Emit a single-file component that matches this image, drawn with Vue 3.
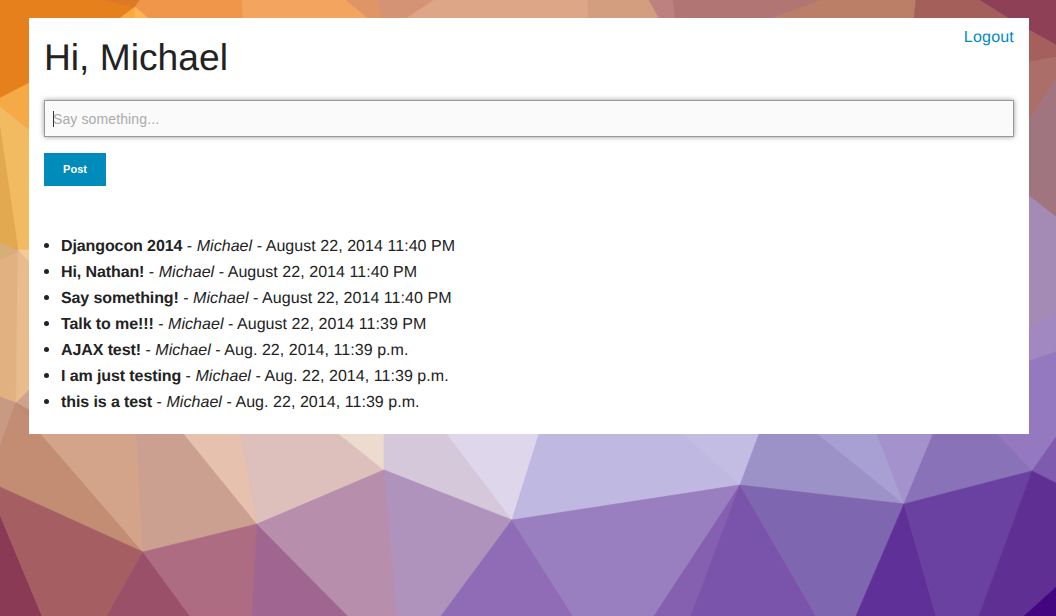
<script setup>
const facets = [
  ['#e5801c', '0,0 140,0 140,18 0,110'],
  ['#dc7a27', '103,0 135,7 140,0'],
  ['#f0964a', '140,0 242,0 243,18 148,18 135,7'],
  ['#f9a942', '135,7 135,18 120,18'],
  ['#fcb652', '135,7 148,18 135,18'],
  ['#f3a55f', '242,0 346,0 368,18 243,18'],
  ['#e09566', '346,0 378,0 382,18 368,18'],
  ['#d49374', '378,0 434,0 407,18 382,18'],
  ['#dda686', '434,0 588,0 588,18 407,18'],
  ['#d39e80', '588,0 649,0 659,18 588,18'],
  ['#bd8280', '649,0 673,0 675,18 659,18'],
  ['#b17673', '673,0 822,0 773,18 675,18'],
  ['#bb7f68', '822,0 916,0 914,18 773,18'],
  ['#a55f5b', '916,0 980,0 1009,18 914,18'],
  ['#8d4056', '980,0 1056,0 1056,45 1029,30 1029,18 1009,18'],
  ['#a55f5d', '1029,30 1056,45 1056,57 1029,62'],
  ['#ab6e68', '1029,62 1056,57 1056,80 1029,120'],
  ['#a0757f', '1029,120 1056,80 1056,217 1029,196'],
  ['#a48bb5', '1029,196 1056,217 1056,312 1029,330'],
  ['#a288c0', '1029,330 1056,312 1056,352 1029,361'],
  ['#9478c0', '1029,361 1056,352 1056,437 1032,471 997,434 1029,434'],
  ['#f5aa46', '0,98 29,83 29,130 0,107'],
  ['#f2bb62', '0,107 29,130 29,250 18,250 0,128'],
  ['#e2a950', '0,128 18,250 0,243'],
  ['#d6ae78', '0,243 18,250 0,260'],
  ['#f2cc94', '18,250 29,250 29,262'],
  ['#e1b182', '0,260 18,251 16,403 0,397'],
  ['#e9bc8d', '18,251 29,262 29,390 16,403'],
  ['#c99a83', '0,397 16,403 0,447'],
  ['#cfa28e', '16,403 29,390 29,410'],
  ['#bd8a70', '16,403 29,410 29,434 41,434 2,442'],
  ['#c28d73', '0,447 16,403 41,434 143,552 0,487'],
  ['#d3a489', '41,434 137,434 143,552'],
  ['#cba091', '137,434 184,434 257,524 143,552'],
  ['#e6c2ae', '184,434 241,434 257,524'],
  ['#ddc0bc', '241,434 339,434 384,470 257,524'],
  ['#eedbd0', '339,434 384,434 384,470'],
  ['#d5c8da', '384,434 447,434 512,520 384,470'],
  ['#ded7ec', '447,434 539,434 512,520'],
  ['#bfb8e0', '539,434 683,434 740,485 512,520'],
  ['#c3bde4', '683,434 759,434 740,485'],
  ['#9d92c8', '759,434 818,434 904,504 740,485'],
  ['#a89fd2', '818,434 877,434 904,504'],
  ['#a392cc', '877,434 933,434 904,504'],
  ['#8972b8', '933,434 997,434 1032,471 904,504'],
  ['#7f5bb0', '1032,471 1056,437 1056,483'],
  ['#8b3a55', '0,515 42,616 0,616'],
  ['#a55f63', '0,487 143,552 107,616 42,616 0,515'],
  ['#9a5068', '143,552 190,616 107,616'],
  ['#ae6c83', '143,552 257,524 252,616 190,616'],
  ['#a06691', '257,524 348,616 252,616'],
  ['#b78fac', '257,524 384,470 397,616 348,616'],
  ['#af93bc', '384,470 512,520 441,616 397,616'],
  ['#916cb6', '512,520 573,616 441,616'],
  ['#997fc0', '512,520 740,485 654,616 573,616'],
  ['#8560b0', '740,485 691,616 654,616'],
  ['#7a53aa', '740,485 816,616 691,616'],
  ['#7f66b0', '740,485 904,504 856,616 816,616'],
  ['#5f3097', '904,504 936,616 856,616'],
  ['#6a41a0', '904,504 1032,471 979,616 936,616'],
  ['#5f2f94', '1032,471 1056,483 1056,587 1024,616 979,616'],
  ['#430680', '1056,587 1056,616 1024,616'],
]

const posts = [
  ['Djangocon 2014', 'August 22, 2014 11:40 PM'],
  ['Hi, Nathan!', 'August 22, 2014 11:40 PM'],
  ['Say something!', 'August 22, 2014 11:40 PM'],
  ['Talk to me!!!', 'August 22, 2014 11:39 PM'],
  ['AJAX test!', 'Aug. 22, 2014, 11:39 p.m.'],
  ['I am just testing', 'Aug. 22, 2014, 11:39 p.m.'],
  ['this is a test', 'Aug. 22, 2014, 11:39 p.m.'],
]
</script>

<template>
  <div class="page">
    <svg class="backdrop" viewBox="0 0 1056 616" width="1056" height="616" aria-hidden="true">
      <rect width="1056" height="616" fill="#c9a0a0" />
      <polygon v-for="f in facets" :key="f[1]" :points="f[1]" :fill="f[0]" :stroke="f[0]" stroke-width="0.6" />
    </svg>
    <main class="card">
      <header class="head">
        <h1>Hi, Michael</h1>
        <a class="logout" href="#">Logout</a>
      </header>
      <form class="composer" @submit.prevent>
        <div class="field">
          <input type="text" placeholder="Say something..." />
          <span class="caret"></span>
        </div>
        <button type="submit">Post</button>
      </form>
      <ul class="posts">
        <li v-for="p in posts" :key="p[0]">
          <strong>{{ p[0] }}</strong> - <em>Michael</em> - {{ p[1] }}
        </li>
      </ul>
    </main>
  </div>
</template>

<style>
html, body { margin: 0; overflow: hidden; }
</style>

<style scoped>
.page {
  position: relative;
  width: 1056px;
  height: 616px;
  overflow: hidden;
  padding: 18px 27px 0 29px;
  box-sizing: border-box;
  font-family: "Liberation Sans", Arial, sans-serif;
  color: #222;
  text-rendering: geometricPrecision;
}
.backdrop {
  position: absolute;
  left: 0;
  top: 0;
  display: block;
}
.card {
  position: relative;
  background: #fff;
  padding: 7px 15px 20px;
  height: 416px;
  box-sizing: border-box;
}
.head {
  display: flex;
  justify-content: space-between;
  align-items: flex-start;
  margin-bottom: 21px;
}
h1 {
  margin: 10px 0 0;
  font-size: 37.2px;
  line-height: 44px;
  font-weight: 400;
  color: #222;
}
.logout {
  font-size: 16px;
  line-height: 26px;
  letter-spacing: 0.2px;
  color: #008cba;
  text-decoration: none;
}
.field { position: relative; }
input {
  display: block;
  width: 100%;
  height: 37px;
  box-sizing: border-box;
  padding: 0 8px;
  border: 1px solid #999;
  border-radius: 0;
  background: #fafafa;
  box-shadow: 0 0 5px #999;
  font: 14px "Liberation Sans", Arial, sans-serif;
  letter-spacing: 0.12px;
  color: #222;
  outline: none;
}
input::placeholder { color: #aaa; opacity: 1; }
.caret {
  position: absolute;
  left: 9px;
  top: 11px;
  width: 1px;
  height: 16px;
  background: #333;
}
button {
  display: block;
  margin: 16px 0 0;
  width: 62px;
  height: 33px;
  padding: 0 0 2px;
  border: 0;
  border-radius: 0;
  background: #008cba;
  color: #fff;
  font: bold 11px "Liberation Sans", Arial, sans-serif;
}
.posts {
  margin: 48px 0 0;
  padding: 0 0 0 17px;
  font-size: 16px;
  line-height: 26px;
  letter-spacing: 0.05px;
  color: #222;
  list-style: none;
}
.posts strong { letter-spacing: -0.1px; }
.posts li { position: relative; }
.posts li::before {
  content: "";
  position: absolute;
  left: -17px;
  top: 9px;
  width: 5px;
  height: 5px;
  border-radius: 50%;
  background: #222;
}
</style>
